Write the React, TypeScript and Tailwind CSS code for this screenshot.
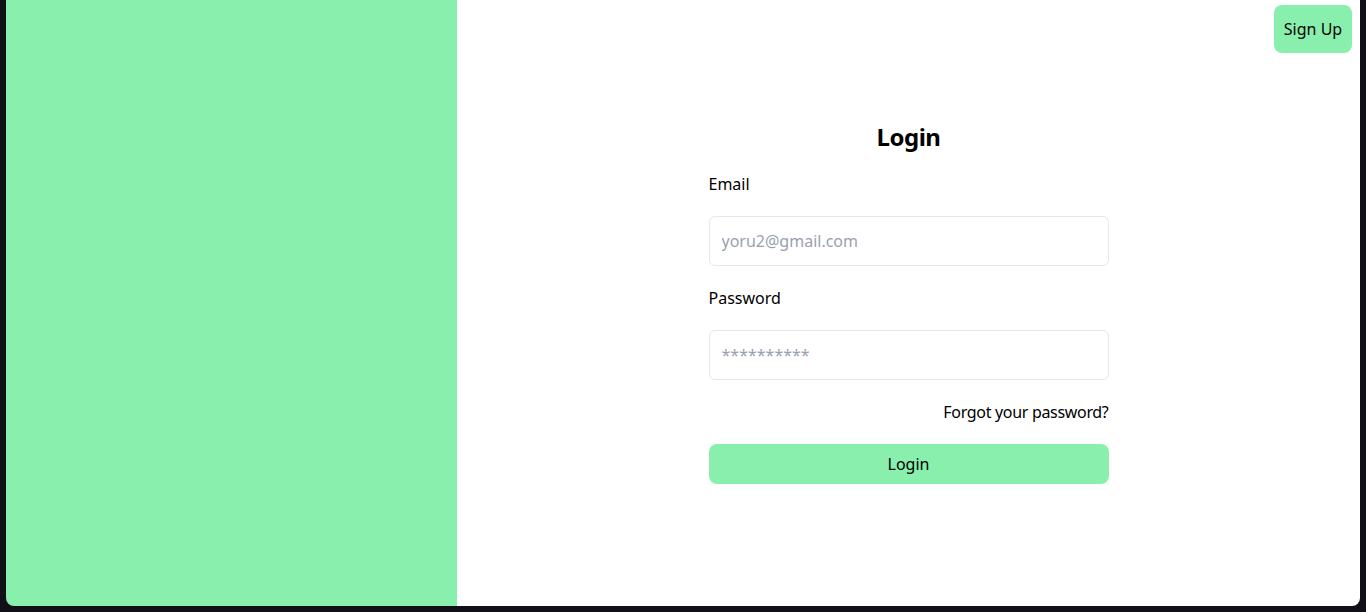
import React from 'react'

const App = () => {
  return (
    <div
      className="h-[612px] w-full bg-[#110f18] px-[6px] pb-[6px]"
      style={{ fontFamily: '"Noto Sans", "Open Sans", sans-serif' }}
    >
      <div className="flex h-full overflow-hidden rounded-b-lg">
        <div className="w-[451px] bg-[#88f0ac]" />
        <div className="flex flex-1 flex-col bg-white">
          <div className="flex justify-end pt-[5px] pr-2">
            <button className="h-12 w-[78px] rounded-lg bg-[#88f0ac] text-base text-black">
              Sign Up
            </button>
          </div>
          <div className="mx-auto mt-[68px] flex w-[400px] flex-col gap-5">
            <h1 className="text-center text-2xl leading-8 font-bold text-black -mb-px tracking-[-0.02em]">Login</h1>
            <label className="text-base leading-6 text-black">Email</label>
            <input
              type="email"
              placeholder="yoru2@gmail.com"
              className="h-[50px] rounded-md border border-gray-200 px-3 text-base outline-none placeholder:text-gray-400"
            />
            <label className="text-base leading-6 text-black">Password</label>
            <input
              type="password"
              placeholder="**********"
              className="h-[50px] rounded-md border border-gray-200 px-3 text-base outline-none placeholder:text-gray-400"
            />
            <div className="text-right text-base leading-6 text-black tracking-[-0.02em]">Forgot your password?</div>
            <button className="h-10 rounded-lg bg-[#88f0ac] text-base text-black">Login</button>
          </div>
        </div>
      </div>
    </div>
  )
}

export default App
